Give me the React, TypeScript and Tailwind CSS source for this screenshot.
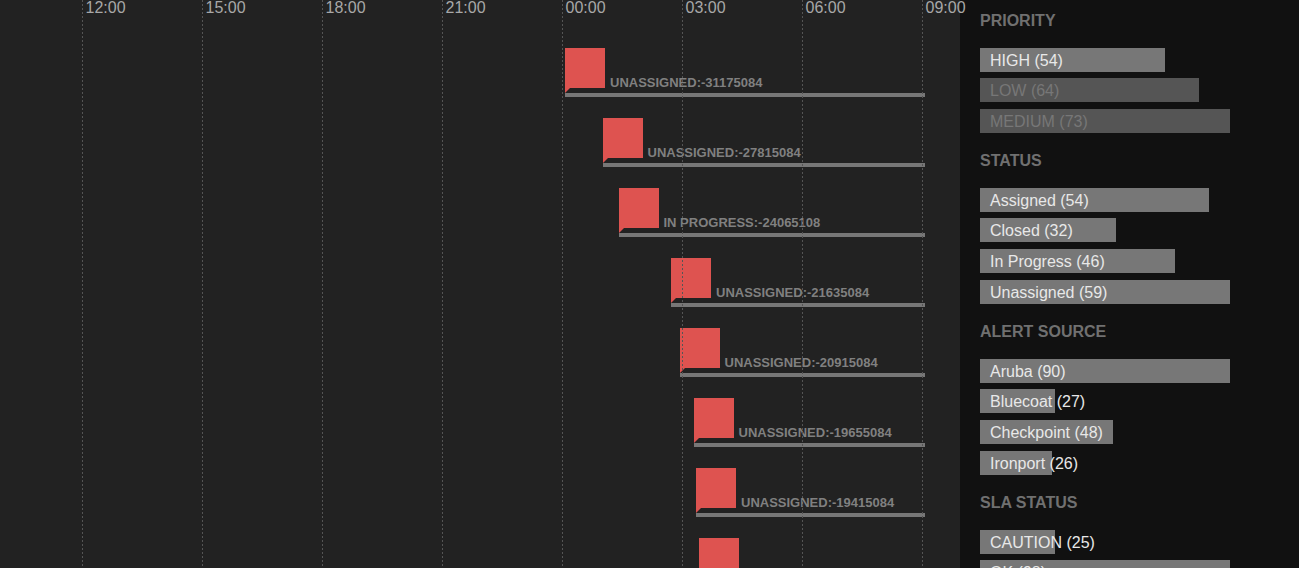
import React from 'react';

const HOURS = ['12:00', '15:00', '18:00', '21:00', '00:00', '03:00', '06:00', '09:00'];

const ALERTS = [
  { left: 565, label: 'UNASSIGNED:-31175084' },
  { left: 602.5, label: 'UNASSIGNED:-27815084' },
  { left: 618.5, label: 'IN PROGRESS:-24065108' },
  { left: 671, label: 'UNASSIGNED:-21635084' },
  { left: 679.5, label: 'UNASSIGNED:-20915084' },
  { left: 693.5, label: 'UNASSIGNED:-19655084' },
  { left: 696, label: 'UNASSIGNED:-19415084' },
  { left: 698.5, label: 'UNASSIGNED:-19175084' },
];

const FILTERS = [
  {
    title: 'PRIORITY',
    items: [
      { name: 'HIGH (54)', width: 185 },
      { name: 'LOW (64)', width: 219, off: true },
      { name: 'MEDIUM (73)', width: 250, off: true },
    ],
  },
  {
    title: 'STATUS',
    items: [
      { name: 'Assigned (54)', width: 229 },
      { name: 'Closed (32)', width: 136 },
      { name: 'In Progress (46)', width: 195 },
      { name: 'Unassigned (59)', width: 250 },
    ],
  },
  {
    title: 'ALERT SOURCE',
    items: [
      { name: 'Aruba (90)', width: 250 },
      { name: 'Bluecoat (27)', width: 75 },
      { name: 'Checkpoint (48)', width: 133 },
      { name: 'Ironport (26)', width: 72 },
    ],
  },
  {
    title: 'SLA STATUS',
    items: [
      { name: 'CAUTION (25)', width: 75 },
      { name: 'OK (98)', width: 250 },
    ],
  },
];

const AlertRow = ({ left, label }: { left: number; label: string }) => (
  <div className="h-[70px] shrink-0 flex flex-col" style={{ marginLeft: left }}>
    <div className="flex items-start h-10">
      <div className="w-10 h-10 bg-[#de5350] shrink-0" />
      <span className="ml-[5px] mt-[27px] text-[13px] leading-[15px] font-bold text-[#808080] whitespace-nowrap">{label}</span>
    </div>
    <svg width="5" height="5" viewBox="0 0 5 5" className="block shrink-0">
      <polygon points="0,0 5,0 0,5" fill="#de5350" />
    </svg>
    <div className="h-1 bg-[#777] shrink-0" />
  </div>
);

const FilterBar = ({ name, width, off }: { name: string; width: number; off?: boolean }) => (
  <div className="relative h-6">
    <div className={`absolute left-0 top-0 h-6 ${off ? 'bg-[#555]' : 'bg-[#777]'}`} style={{ width }} />
    <span className={`relative block pl-2.5 pt-px text-base leading-6 whitespace-nowrap ${off ? 'text-[#777]' : 'text-[#e8e8e8]'}`}>{name}</span>
  </div>
);

export default function App() {
  return (
    <div className="flex h-screen w-full overflow-hidden bg-[#111] font-['Liberation_Sans',Arial,sans-serif]">
      <div className="relative w-[960px] shrink-0 bg-[#222] pr-[35px]">
        <div className="flex flex-col pt-12">
          {ALERTS.map((a) => (
            <AlertRow key={a.label} left={a.left} label={a.label} />
          ))}
        </div>
        {/* hour grid sits over the rows */}
        <div className="absolute inset-0 flex pl-[82px] pointer-events-none z-10">
          {HOURS.map((h) => (
            <div key={h} className="relative w-[120px] shrink-0 h-full">
              <div className="absolute inset-y-0 left-0 w-px bg-[repeating-linear-gradient(to_bottom,#555_0,#555_2px,transparent_2px,transparent_4px)]" />
              <span className="block pl-[3.5px] text-base leading-[15px] text-[#a8a8a8] whitespace-nowrap">{h}</span>
            </div>
          ))}
        </div>
      </div>
      <div className="flex-1 pl-5 flex flex-col pt-3">
        {FILTERS.map((f) => (
          <div key={f.title} className="h-[171px] shrink-0 first:h-[140px]">
            <div className="text-base leading-[18px] font-bold text-[#707070] whitespace-nowrap">{f.title}</div>
            <div className="mt-[17.7px] flex flex-col gap-[6.67px]">
              {f.items.map((it) => (
                <FilterBar key={it.name} name={it.name} width={it.width} off={(it as { off?: boolean }).off} />
              ))}
            </div>
          </div>
        ))}
      </div>
    </div>
  );
}
